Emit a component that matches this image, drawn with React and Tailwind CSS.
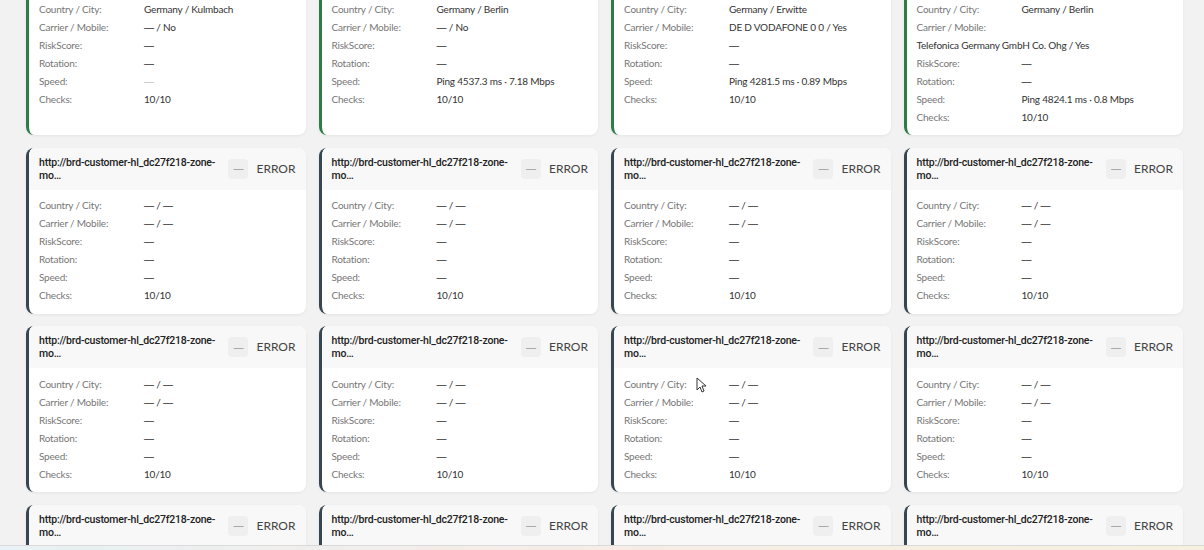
import React from "react";

const URL_TEXT = "http://brd-customer-hl_dc27f218-zone-";

const okCards = [
  {
    country: "Germany / Kulmbach",
    carrier: "— / No",
    risk: "—",
    rotation: "—",
    speed: "—",
    speedFaded: true,
    checks: "10/10",
  },
  {
    country: "Germany / Berlin",
    carrier: "— / No",
    risk: "—",
    rotation: "—",
    speed: "Ping 4537.3 ms · 7.18 Mbps",
    checks: "10/10",
  },
  {
    country: "Germany / Erwitte",
    carrier: "DE D VODAFONE 0 0 / Yes",
    risk: "—",
    rotation: "—",
    speed: "Ping 4281.5 ms · 0.89 Mbps",
    checks: "10/10",
  },
  {
    country: "Germany / Berlin",
    carrier: "Telefonica Germany GmbH Co. Ohg / Yes",
    carrierWrap: true,
    risk: "—",
    rotation: "—",
    speed: "Ping 4824.1 ms · 0.8 Mbps",
    checks: "10/10",
  },
];

const errorCard = {
  country: "— / —",
  carrier: "— / —",
  risk: "—",
  rotation: "—",
  speed: "—",
  checks: "10/10",
};

// em dashes in Lato are short, draw them with Liberation Sans
const Val = ({ text }) =>
  text.split(/(—)/).map((part, i) =>
    part === "—" ? (
      <span key={i} className="font-['Liberation_Sans',Arial,sans-serif] tracking-normal">
        —
      </span>
    ) : (
      <React.Fragment key={i}>{part}</React.Fragment>
    )
  );

const Row = ({ label, value, faded, wrap }) => {
  if (wrap) {
    return (
      <>
        <div className="h-[18px] flex items-center text-[#777]">{label}</div>
        <div className="h-[18px] flex items-center text-[#333] whitespace-nowrap">{value}</div>
      </>
    );
  }
  return (
    <div className="h-[18px] flex items-center">
      <span className="w-[105px] shrink-0 text-[#777]">{label}</span>
      <span className={`whitespace-pre ${faded ? "text-[#c4c4c4]" : "text-[#333]"}`}>
        <Val text={value} />
      </span>
    </div>
  );
};

const Card = ({ data, status, accent }) => (
  <div
    className={`flex flex-col bg-white rounded-lg border-l-[3px] shadow-[0_1px_3px_rgba(0,0,0,0.06)] overflow-hidden ${accent}`}
  >
    <div className="h-[42px] shrink-0 bg-[#f8f8f8] flex items-center justify-between pl-[10px] pr-[10px]">
      <div className="font-['Roboto',Arial,sans-serif] font-medium text-[10.5px] tracking-[-0.2px] leading-[13px] text-[#222] whitespace-nowrap">
        {URL_TEXT}
        <br />
        mo…
      </div>
      <div className="flex items-center gap-[8px]">
        <span className="w-[20px] h-[20px] rounded-[4px] bg-[#efefef] text-[#9a9a9a] text-[10px] font-['Liberation_Sans',Arial,sans-serif] flex items-center justify-center">
          —
        </span>
        <span className="text-[12px] text-[#444]">{status}</span>
      </div>
    </div>
    <div className="flex-1 pt-[7px] pb-[9px] px-[10px] text-[10px] tracking-[-0.2px]">
      <Row label="Country / City:" value={data.country} />
      <Row label="Carrier / Mobile:" value={data.carrier} wrap={data.carrierWrap} />
      <Row label="RiskScore:" value={data.risk} />
      <Row label="Rotation:" value={data.rotation} />
      <Row label="Speed:" value={data.speed} faded={data.speedFaded} />
      <Row label="Checks:" value={data.checks} />
    </div>
  </div>
);

export default function App() {
  return (
    <div className="relative w-[1204px] h-[550px] overflow-hidden bg-[#f2f2f2] flex flex-col font-['Lato','Open_Sans',sans-serif]">
      <div className="flex-1 overflow-hidden pl-[26px] pr-[21px]">
        <div className="grid grid-cols-4 gap-x-[13px] gap-y-[12.5px] mt-[-49px]">
          {okCards.map((c, i) => (
            <Card key={`ok-${i}`} data={c} status="OK" accent="border-[#2e7d46]" />
          ))}
          {Array.from({ length: 12 }).map((_, i) => (
            <Card key={`err-${i}`} data={errorCard} status="ERROR" accent="border-[#374650]" />
          ))}
        </div>
      </div>
      <div className="h-[5px] shrink-0 border-t border-[#d9d9d9] bg-gradient-to-r from-[#e8f1f4] via-[#f7ece6] to-[#f4f1de]" />
      <svg
        className="absolute left-[696px] top-[377px]"
        width="10"
        height="16"
        viewBox="0 0 10 16"
      >
        <path d="M1 1 L1 13 L4 10 L6 15 L8 14 L6 9 L10 9 Z" fill="#fff" stroke="#333" strokeWidth="1" />
      </svg>
    </div>
  );
}
